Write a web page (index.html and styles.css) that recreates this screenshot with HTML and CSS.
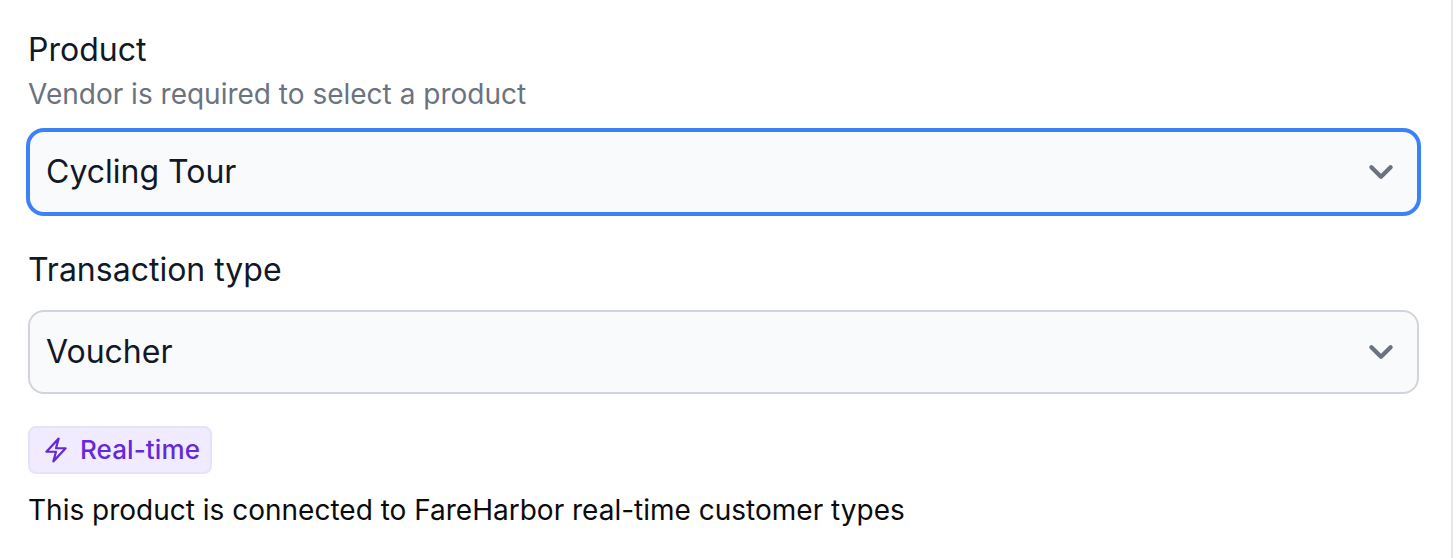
FILE: index.html
```html
<!DOCTYPE html>
<html lang="en">
<head>
  <meta charset="UTF-8">
  <title>Product</title>
  <link rel="stylesheet" href="styles.css">
</head>
<body>
  <div class="panel">
    <div class="field">
      <label class="field-label">Product</label>
      <p class="field-hint">Vendor is required to select a product</p>
      <div class="select select-focus">
        <span class="select-value">Cycling Tour</span>
        <svg class="chevron" viewBox="0 0 20 20" fill="none" stroke="currentColor" stroke-width="1.8" stroke-linecap="round" stroke-linejoin="round"><path d="M6 8l4 4 4-4"/></svg>
      </div>
    </div>
    <div class="field">
      <label class="field-label">Transaction type</label>
      <div class="select">
        <span class="select-value">Voucher</span>
        <svg class="chevron" viewBox="0 0 20 20" fill="none" stroke="currentColor" stroke-width="1.8" stroke-linecap="round" stroke-linejoin="round"><path d="M6 8l4 4 4-4"/></svg>
      </div>
    </div>
    <div class="badge">
      <svg class="bolt" viewBox="0 0 24 24" fill="none" stroke="currentColor" stroke-width="1.9" stroke-linecap="round" stroke-linejoin="round"><path d="M3.75 13.5l10.5-11.25L12 10.5h8.25L9.75 21.75 12 13.5H3.75z"/></svg>
      <span class="badge-text">Real-time</span>
    </div>
    <p class="note">This product is connected to FareHarbor real-time customer types</p>
  </div>
</body>
</html>
```

FILE: styles.css
```css
* {
  box-sizing: border-box;
}
body {
  margin: 0;
  background-color: #fff;
  font-family: Inter, "Liberation Sans", sans-serif;
  color: #111827;
}
.panel {
  height: 558px;
  margin-right: 3px;
  padding: 30px 32px 0 28px;
  border-right: 2px solid #e5e7eb;
}
.field {
  margin-bottom: 32px;
}
.field:first-child {
  margin-bottom: 36px;
}
.field-label {
  display: block;
  font-size: 32px;
  line-height: 40px;
  margin-bottom: 4px;
}
.field-label + .select {
  margin-top: 20px;
}
.field-hint {
  margin: 0 0 16px;
  font-size: 28px;
  line-height: 40px;
  color: #6b7280;
}
.select {
  display: flex;
  align-items: center;
  justify-content: space-between;
  height: 84px;
  padding: 0 12px 0 16px;
  background-color: #f9fafb;
  border: 2px solid #d1d5db;
  border-radius: 16px;
  font-size: 32px;
}
.select-value {
  margin-bottom: 2px;
}
.select-focus {
  border-color: #3b82f6;
  box-shadow: 0 0 0 2px #3b82f6;
}
.chevron {
  width: 48px;
  height: 48px;
  color: #6b7280;
}
.badge {
  display: inline-flex;
  align-items: center;
  gap: 10px;
  height: 48px;
  padding: 0 10px 0 12px;
  background-color: #f0ebfe;
  border: 2px solid #e7e3f6;
  border-radius: 8px;
  color: #6429d9;
  font-size: 26px;
  font-weight: 500;
  letter-spacing: 0.1px;
}
.badge-text {
  margin-bottom: 2px;
}
.bolt {
  width: 28px;
  height: 28px;
}
.note {
  margin: 16px 0 0;
  font-size: 28px;
  line-height: 40px;
  color: #0b0b0b;
}
```
